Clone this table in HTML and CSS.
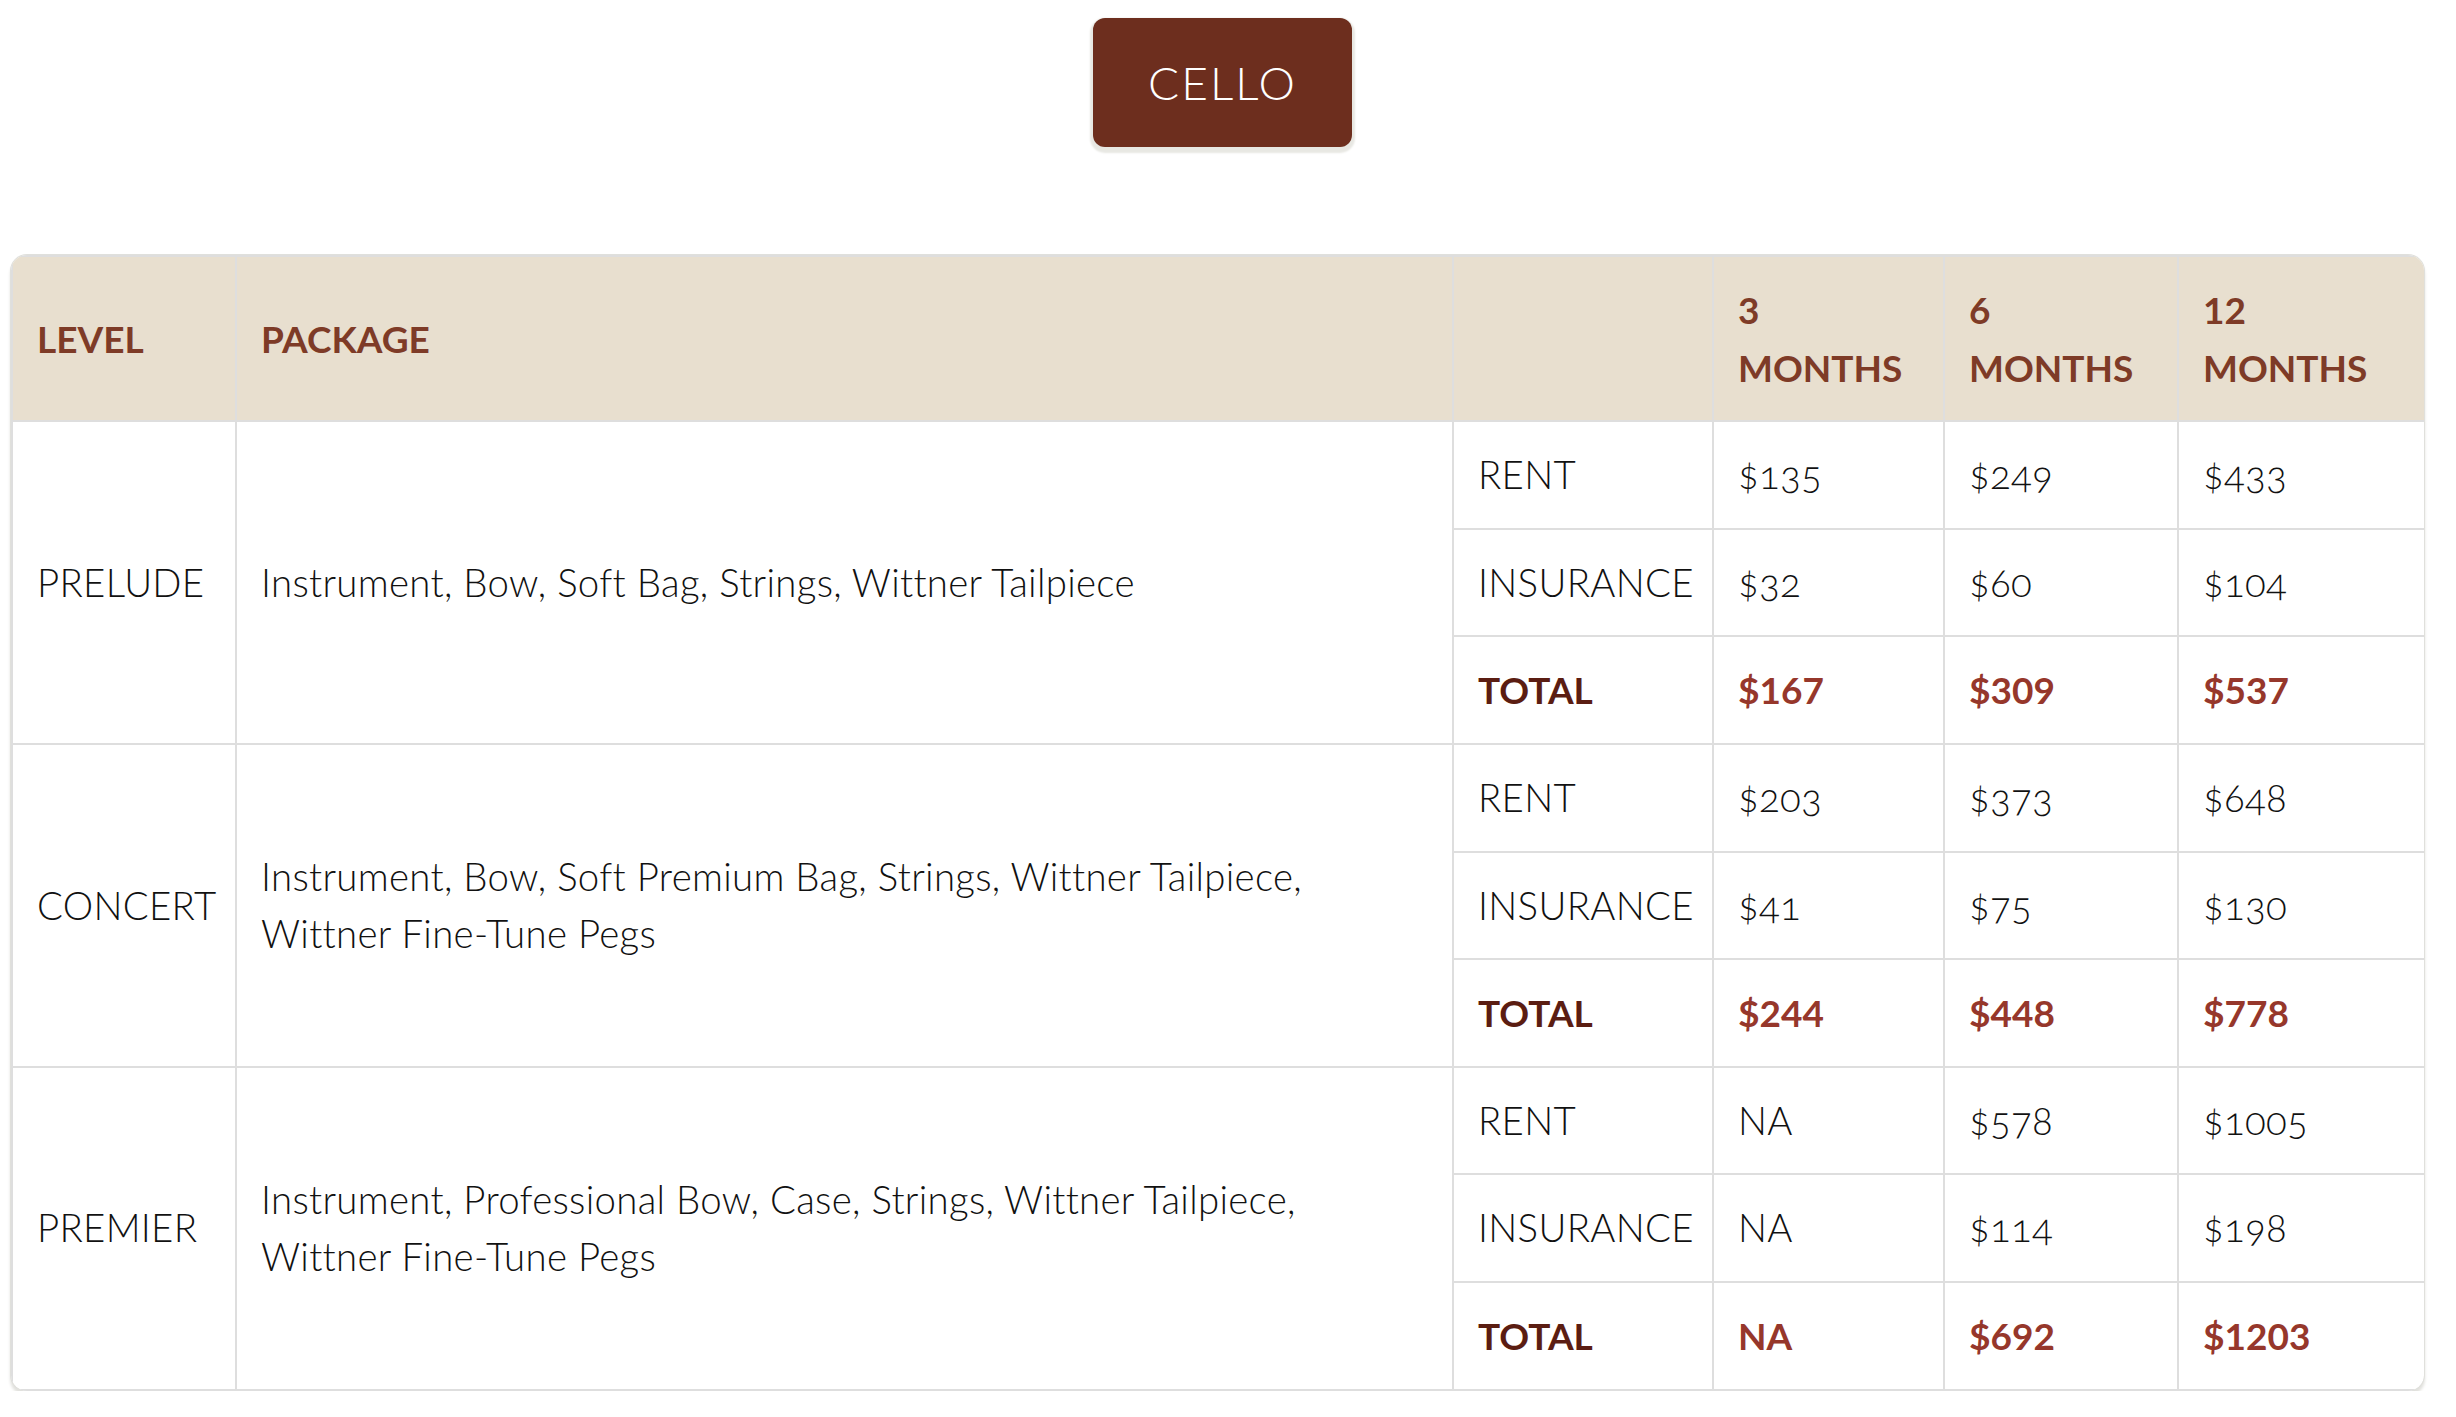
FILE: index.html
```html
<!DOCTYPE html>
<html lang="en">
<head>
<meta charset="utf-8">
<title>Cello Rental Rates</title>
<link rel="stylesheet" href="styles.css">
</head>
<body>
<div class="page">
  <div class="tabs"><span class="tab">CELLO</span></div>
  <div class="table-wrap">
    <table class="rates">
      <colgroup>
        <col class="c-level">
        <col class="c-package">
        <col class="c-type">
        <col class="c-3">
        <col class="c-6">
        <col class="c-12">
      </colgroup>
      <thead>
        <tr>
          <th>LEVEL</th>
          <th>PACKAGE</th>
          <th></th>
          <th>3<br>MONTHS</th>
          <th>6<br>MONTHS</th>
          <th>12<br>MONTHS</th>
        </tr>
      </thead>
      <tbody>
        <tr>
          <td rowspan="3">PRELUDE</td>
          <td rowspan="3">Instrument, Bow, Soft Bag, Strings, Wittner Tailpiece</td>
          <td>RENT</td><td>$135</td><td>$249</td><td>$433</td>
        </tr>
        <tr><td>INSURANCE</td><td>$32</td><td>$60</td><td>$104</td></tr>
        <tr class="total"><td>TOTAL</td><td>$167</td><td>$309</td><td>$537</td></tr>
        <tr>
          <td rowspan="3">CONCERT</td>
          <td rowspan="3">Instrument, Bow, Soft Premium Bag, Strings, Wittner Tailpiece, Wittner Fine-Tune Pegs</td>
          <td>RENT</td><td>$203</td><td>$373</td><td>$648</td>
        </tr>
        <tr><td>INSURANCE</td><td>$41</td><td>$75</td><td>$130</td></tr>
        <tr class="total"><td>TOTAL</td><td>$244</td><td>$448</td><td>$778</td></tr>
        <tr>
          <td rowspan="3">PREMIER</td>
          <td rowspan="3">Instrument, Professional Bow, Case, Strings, Wittner Tailpiece, Wittner Fine-Tune Pegs</td>
          <td>RENT</td><td>NA</td><td>$578</td><td>$1005</td>
        </tr>
        <tr><td>INSURANCE</td><td>NA</td><td>$114</td><td>$198</td></tr>
        <tr class="total"><td>TOTAL</td><td>NA</td><td>$692</td><td>$1203</td></tr>
      </tbody>
    </table>
  </div>
</div>
</body>
</html>
```

FILE: styles.css
```css
html, body {
  margin: 0;
  padding: 0;
  background: #ffffff;
}

body {
  font-family: "Lato", "Open Sans", sans-serif;
}

.page {
  width: 2413px;
  margin-left: 11px;
  padding-top: 18px;
}

.tabs {
  display: flex;
  justify-content: center;
  padding-left: 10px;
}

.tab {
  display: block;
  width: 259px;
  height: 129px;
  line-height: 129px;
  text-align: center;
  background: #6d2e1e;
  color: #ffffff;
  font-family: "Lato", sans-serif;
  font-size: 46px;
  font-weight: 300;
  letter-spacing: 2px;
  border-radius: 12px;
  box-shadow: 0 3px 2px 3px #e8e8e3;
}

.table-wrap {
  margin-top: 108px;
  border-radius: 16px;
  overflow: hidden;
  box-shadow: 0 0 0 1px #e0e0dc, 0 4px 3px 1px #e2e2de;
}

.rates {
  width: 100%;
  border-collapse: collapse;
  table-layout: fixed;
  font-size: 38.4px;
  line-height: 57.6px;
}

.c-level { width: 224px; }
.c-package { width: 1217px; }
.c-type { width: 260px; }
.c-3 { width: 231px; }
.c-6 { width: 234px; }
.c-12 { width: 247px; }

.rates th,
.rates td {
  padding: 24px 24px;
  border: 2px solid #dedede;
  text-align: left;
  vertical-align: middle;
}

.rates th {
  background: #e8dfcf;
  color: #7e3b27;
  font-weight: 700;
  font-size: 37px;
}

.rates td {
  color: #111111;
  font-weight: 300;
  letter-spacing: 0.3px;
  font-variant-numeric: oldstyle-nums;
}

.rates tr.total td {
  font-weight: 700;
  font-size: 37px;
  letter-spacing: 0;
  color: #96372b;
  font-variant-numeric: lining-nums;
}

.rates tr.total td:first-child {
  color: #5b1d12;
}
```
